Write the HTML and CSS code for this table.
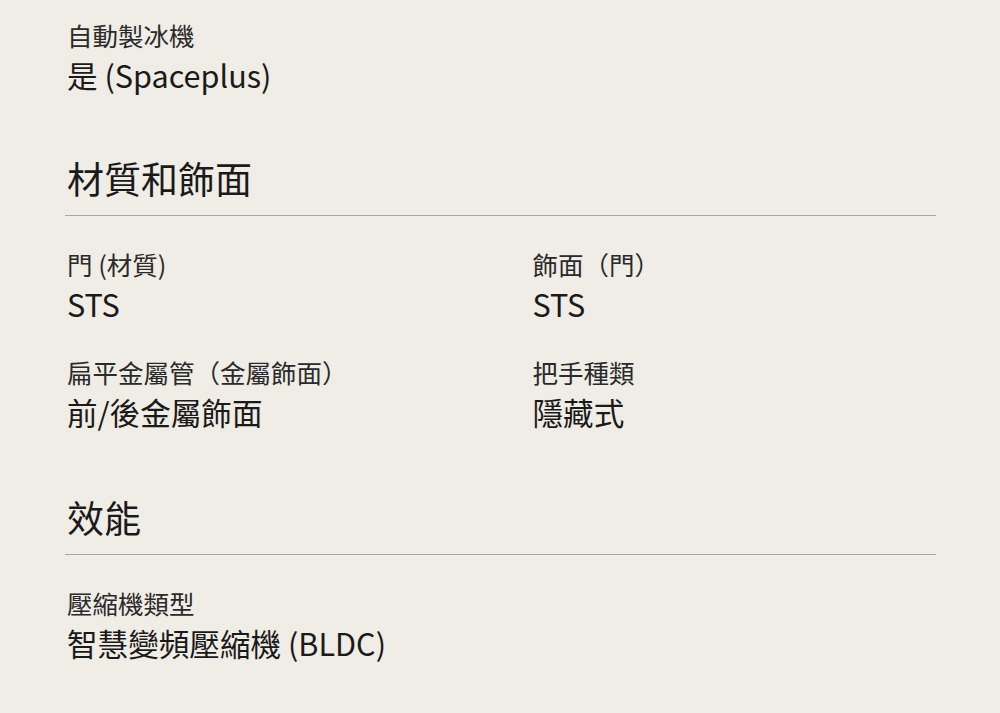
FILE: index.html
```html
<!DOCTYPE html>
<html lang="zh-Hant">
<head>
<meta charset="utf-8">
<link rel="stylesheet" href="styles.css">
</head>
<body>
<div class="page">
  <div class="spec">
    <div class="label">自動製冰機</div>
    <div class="value">是 (Spaceplus)</div>
  </div>

  <section class="group">
    <h2 class="group-title">材質和飾面</h2>
    <div class="grid">
      <div class="spec">
        <div class="label">門 (材質)</div>
        <div class="value">STS</div>
      </div>
      <div class="spec">
        <div class="label">飾面（門）</div>
        <div class="value">STS</div>
      </div>
      <div class="spec">
        <div class="label">扁平金屬管（金屬飾面）</div>
        <div class="value">前/後金屬飾面</div>
      </div>
      <div class="spec">
        <div class="label">把手種類</div>
        <div class="value">隱藏式</div>
      </div>
    </div>
  </section>

  <section class="group">
    <h2 class="group-title">效能</h2>
    <div class="grid">
      <div class="spec">
        <div class="label">壓縮機類型</div>
        <div class="value">智慧變頻壓縮機 (BLDC)</div>
      </div>
    </div>
  </section>
</div>
</body>
</html>
```
FILE: styles.css
```css
html, body {
  margin: 0;
  padding: 0;
  background: #f0ece6;
}
body {
  font-family: "Noto Sans CJK TC", "Noto Sans CJK SC", "Noto Sans", sans-serif;
  color: #1e1e1e;
}
.page {
  padding: 18px 64px 0 65px;
}
.spec {
  display: flex;
  flex-direction: column;
  gap: 3px;
  padding-left: 2px;
}
.label {
  font-size: 25.5px;
  line-height: 34px;
  color: #2a2a2a;
}
.value {
  font-size: 30.6px;
  line-height: 40px;
  color: #1a1a1a;
}
.group {
  margin-top: 60px;
}
.group-title {
  margin: 0;
  padding: 0 0 14px 2px;
  font-size: 37px;
  font-weight: 400;
  line-height: 46px;
  border-bottom: 1px solid #aaa7a1;
  color: #1a1a1a;
}
.grid {
  display: grid;
  grid-template-columns: 1fr 1fr;
  column-gap: 60px;
  row-gap: 31px;
  padding: 31px 0 2px;
}
```
